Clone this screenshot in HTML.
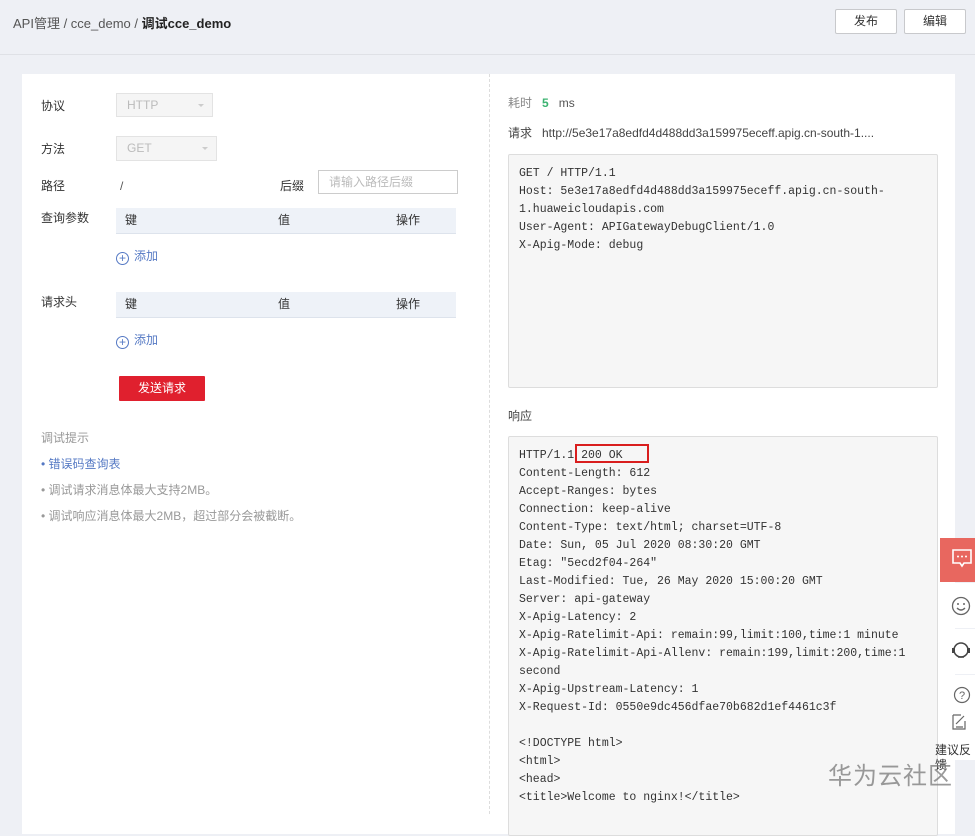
<!DOCTYPE html>
<html><head><meta charset="utf-8"><style>
*{margin:0;padding:0;box-sizing:border-box}
body{width:975px;height:813px;overflow:hidden;background:#eef0f5;font-family:"Liberation Sans","Noto Sans CJK SC",sans-serif;font-size:12px;color:#333;position:relative}
.a{position:absolute}
.hdr{left:0;top:0;width:975px;height:55px;border-bottom:1px solid #dfe1e6}
.btn{top:9px;height:25px;width:62px;border:1px solid #c8c9cc;background:#fff;border-radius:2px;text-align:center;line-height:23px;font-size:12px}
.card{left:22px;top:74px;width:933px;height:760px;background:#fff}
.div{left:489px;top:74px;height:740px;border-left:1px dashed #ddd}
.lbl{font-size:12px;color:#333}
.sel{background:#f5f5f5;border:1px solid #e3e3e3;color:#bbb;padding-left:10px;line-height:22px}
.sel:after{content:"";position:absolute;right:8px;top:10px;border:3px solid transparent;border-top-color:#ccc}
.th{left:116px;width:340px;height:26px;background:#eef2f8;border-bottom:1px solid #dde3ec;font-size:12px;line-height:25px}
.th span{position:absolute;top:0}
.add{color:#5579c4;font-size:12px}
.add i{display:inline-block;width:13px;height:13px;border:1px solid #5579c4;border-radius:50%;font-style:normal;text-align:center;line-height:11px;font-size:12px;margin-right:5px;vertical-align:-2px}
.box{left:508px;width:430px;background:#f6f6f6;border:1px solid #ddd;border-radius:2px;font-family:"Liberation Mono",monospace;font-size:11.5px;line-height:18px;color:#333;padding:10px 10px;white-space:pre}
.side{left:940px;width:35px;background:#fff}
</style></head><body>
<div class="a hdr"></div>
<div class="a" style="left:13px;top:13px;font-size:13px;color:#555">API管理 / cce_demo / <b style="color:#222">调试cce_demo</b></div>
<div class="a btn" style="left:835px">发布</div>
<div class="a btn" style="left:904px">编辑</div>
<div class="a card"></div>
<div class="a div"></div>

<div class="a lbl" style="left:41px;top:97px">协议</div>
<div class="a sel" style="left:116px;top:93px;width:97px;height:24px">HTTP</div>
<div class="a lbl" style="left:41px;top:140px">方法</div>
<div class="a sel" style="left:116px;top:136px;width:101px;height:25px">GET</div>
<div class="a lbl" style="left:41px;top:177px">路径</div>
<div class="a" style="left:120px;top:179px;color:#555">/</div>
<div class="a lbl" style="left:280px;top:177px">后缀</div>
<div class="a" style="left:318px;top:170px;width:140px;height:24px;border:1px solid #ccc;color:#bbb;padding-left:10px;line-height:22px">请输入路径后缀</div>
<div class="a lbl" style="left:41px;top:209px">查询参数</div>
<div class="a th" style="top:208px"><span style="left:9px">键</span><span style="left:162px">值</span><span style="left:280px">操作</span></div>
<div class="a add" style="left:116px;top:247px"><i>+</i>添加</div>
<div class="a lbl" style="left:41px;top:293px">请求头</div>
<div class="a th" style="top:292px"><span style="left:9px">键</span><span style="left:162px">值</span><span style="left:280px">操作</span></div>
<div class="a add" style="left:116px;top:331px"><i>+</i>添加</div>
<div class="a" style="left:119px;top:376px;width:86px;height:25px;background:#e0202e;color:#fff;text-align:center;line-height:25px;border-radius:1px">发送请求</div>
<div class="a" style="left:41px;top:429px;color:#999">调试提示</div>
<div class="a" style="left:41px;top:455px;color:#5579c4">• 错误码查询表</div>
<div class="a" style="left:41px;top:481px;color:#999">• 调试请求消息体最大支持2MB。</div>
<div class="a" style="left:41px;top:507px;color:#999">• 调试响应消息体最大2MB，超过部分会被截断。</div>

<div class="a" style="left:508px;top:94px;color:#888">耗时 &nbsp; <b style="color:#3cb371">5</b> &nbsp; <span style="color:#555">ms</span></div>
<div class="a" style="left:508px;top:124px;color:#444">请求 &nbsp; http://5e3e17a8edfd4d488dd3a159975eceff.apig.cn-south-1....</div>
<div class="a box" style="top:154px;height:234px">GET / HTTP/1.1
Host: 5e3e17a8edfd4d488dd3a159975eceff.apig.cn-south-
1.huaweicloudapis.com
User-Agent: APIGatewayDebugClient/1.0
X-Apig-Mode: debug</div>
<div class="a" style="left:508px;top:407px;color:#444">响应</div>
<div class="a box" style="top:436px;height:400px">HTTP/1.1 200 OK
Content-Length: 612
Accept-Ranges: bytes
Connection: keep-alive
Content-Type: text/html; charset=UTF-8
Date: Sun, 05 Jul 2020 08:30:20 GMT
Etag: "5ecd2f04-264"
Last-Modified: Tue, 26 May 2020 15:00:20 GMT
Server: api-gateway
X-Apig-Latency: 2
X-Apig-Ratelimit-Api: remain:99,limit:100,time:1 minute
X-Apig-Ratelimit-Api-Allenv: remain:199,limit:200,time:1
second
X-Apig-Upstream-Latency: 1
X-Request-Id: 0550e9dc456dfae70b682d1ef4461c3f

&lt;!DOCTYPE html&gt;
&lt;html&gt;
&lt;head&gt;
&lt;title&gt;Welcome to nginx!&lt;/title&gt;</div>
<div class="a" style="left:575px;top:444px;width:74px;height:19px;border:2px solid #d91e1e"></div>

<div class="a side" style="top:538px;height:44px;background:#e8675f"></div>
<svg class="a" style="left:951px;top:548px" width="22" height="22" viewBox="0 0 22 22"><path d="M2 2h18v13h-7l-2 3-2-3H2z" fill="none" stroke="#fff" stroke-width="1.6"/><circle cx="7" cy="8.5" r="1" fill="#fff"/><circle cx="11" cy="8.5" r="1" fill="#fff"/><circle cx="15" cy="8.5" r="1" fill="#fff"/></svg>
<div class="a side" style="top:583px;height:45px"></div>
<svg class="a" style="left:951px;top:596px" width="20" height="20" viewBox="0 0 20 20"><circle cx="10" cy="10" r="8.5" fill="none" stroke="#666" stroke-width="1.3"/><circle cx="7" cy="8" r="1" fill="#666"/><circle cx="13" cy="8" r="1" fill="#666"/><path d="M6 12q4 4 8 0" fill="none" stroke="#666" stroke-width="1.3"/></svg>
<div class="a side" style="top:629px;height:45px"></div>
<svg class="a" style="left:950px;top:641px" width="22" height="20" viewBox="0 0 22 20"><circle cx="11" cy="9" r="7" fill="none" stroke="#444" stroke-width="1.5"/><rect x="2" y="7" width="3" height="5" fill="#444"/><rect x="17" y="7" width="3" height="5" fill="#444"/><path d="M8 16h6" stroke="#444" stroke-width="1.5"/></svg>
<div class="a side" style="top:675px;height:85px"></div>
<svg class="a" style="left:953px;top:686px" width="18" height="18" viewBox="0 0 18 18"><circle cx="9" cy="9" r="7.5" fill="none" stroke="#666" stroke-width="1.2"/><text x="9" y="13" font-size="11" text-anchor="middle" fill="#666" font-family="Liberation Sans">?</text></svg>
<svg class="a" style="left:951px;top:713px" width="16" height="18" viewBox="0 0 16 18"><path d="M2 2h8M2 2v14h12V8" fill="none" stroke="#666" stroke-width="1.2"/><path d="M5 11l8-8M5 14h7" stroke="#666" stroke-width="1.2"/></svg>
<div class="a" style="left:935px;top:743px;font-size:12px;color:#333;line-height:15px;width:40px">建议反馈</div>
<div class="a" style="left:828px;top:756px;font-size:24px;color:rgba(120,120,120,0.75);letter-spacing:1px">华为云社区</div>
</body></html>
